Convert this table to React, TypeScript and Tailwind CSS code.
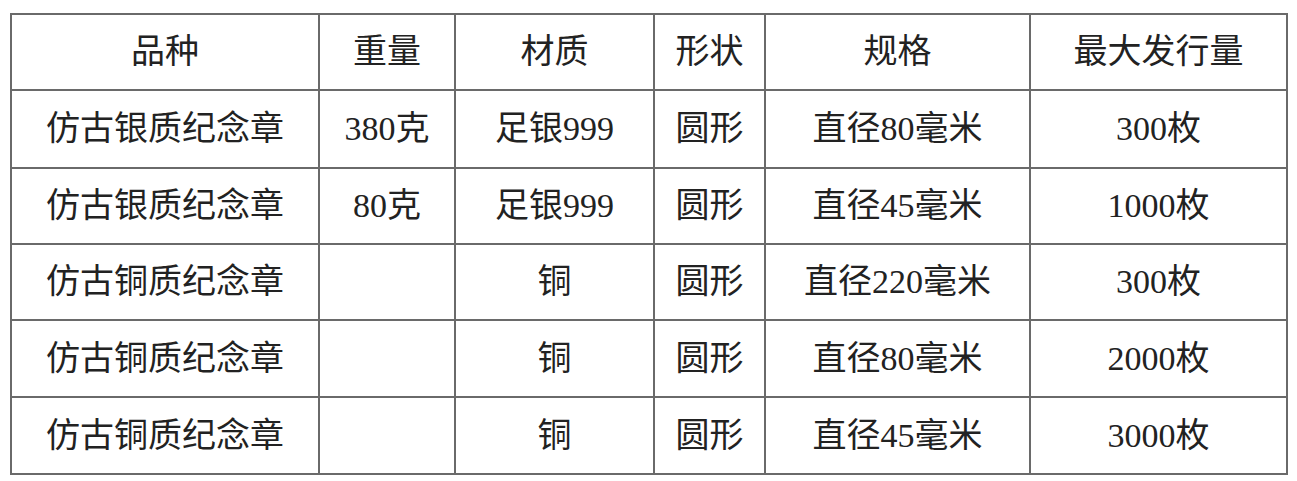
import React from 'react';

const headers = ['品种', '重量', '材质', '形状', '规格', '最大发行量'];

const rows: string[][] = [
  ['仿古银质纪念章', '380克', '足银999', '圆形', '直径80毫米', '300枚'],
  ['仿古银质纪念章', '80克', '足银999', '圆形', '直径45毫米', '1000枚'],
  ['仿古铜质纪念章', '', '铜', '圆形', '直径220毫米', '300枚'],
  ['仿古铜质纪念章', '', '铜', '圆形', '直径80毫米', '2000枚'],
  ['仿古铜质纪念章', '', '铜', '圆形', '直径45毫米', '3000枚'],
];

const Cell: React.FC<{ text: string }> = ({ text }) => (
  <div className="flex items-center justify-center bg-white whitespace-nowrap">{text}</div>
);

export default function App() {
  return (
    <div className="w-[1297px] h-[481px] bg-white pl-[10px] pt-[13px]">
      <div className="grid w-[1278px] grid-cols-[306px_134px_197px_109px_263px_255px] grid-rows-[74px_76px_74px_74px_75px_75px] gap-[2px] bg-[#6a6a6a] p-[2px] text-[34px] leading-none text-[#222] font-['Liberation_Serif','Noto_Sans_CJK_SC',serif]">
        {headers.map((h) => (
          <Cell key={h} text={h} />
        ))}
        {rows.map((r, i) =>
          r.map((c, j) => <Cell key={`${i}-${j}`} text={c} />)
        )}
      </div>
    </div>
  );
}
